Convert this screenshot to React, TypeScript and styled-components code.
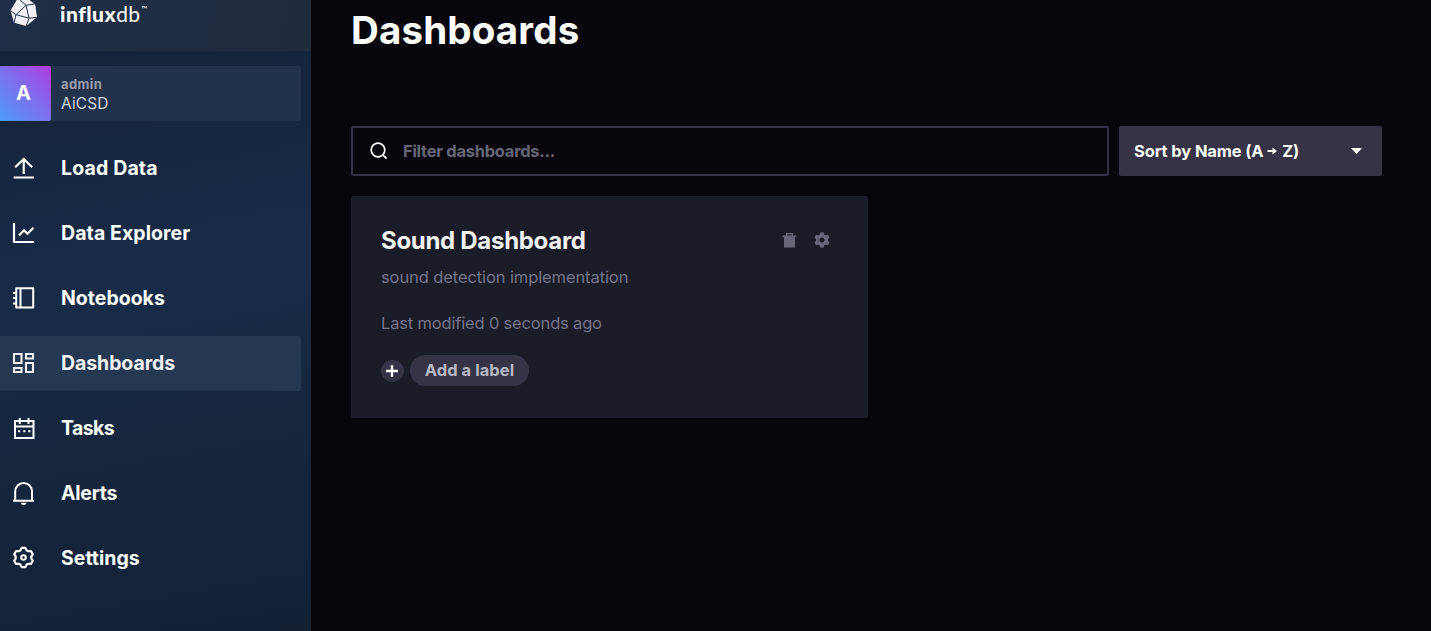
import React from 'react';
import styled, { createGlobalStyle } from 'styled-components';

const GlobalStyle = createGlobalStyle`
  * { box-sizing: border-box; }
  body { margin: 0; background: #07060c; font-family: Inter, "Liberation Sans", sans-serif; }
  button { font-family: inherit; border: 0; padding: 0; background: none; text-align: left; }
`;

const Page = styled.div`
  display: flex;
  width: 1431px;
  height: 631px;
  overflow: hidden;
  background: #07060c;
`;

const Sidebar = styled.nav`
  display: flex;
  flex-direction: column;
  flex: 0 0 311px;
  background: linear-gradient(170deg, #132139 0%, #14243b 12%, #182c48 45%, #15263d 68%, #132339 88%, #132133 100%);
`;

const Brand = styled.div`
  display: flex;
  height: 51px;
  padding-left: 9px;
  background: linear-gradient(100deg, #1f2f47, #1e2b3b);
`;

const Wordmark = styled.div`
  display: flex;
  margin: 1px 0 0 22px;
  font-family: Lato, sans-serif;
  font-size: 21px;
  line-height: 26px;
  color: #fff;
  letter-spacing: 0.5px;
`;
const Strong = styled.span`font-weight: 900;`;
const Thin = styled.span`font-weight: 400; letter-spacing: 0.3px;`;
const Trade = styled.span`font-size: 8px; line-height: 11px; margin: 3px 0 0 1px;`;

const User = styled.div`
  display: flex;
  width: 301px;
  height: 55px;
  margin: 15px 0 20px;
  background: #21334b;
  border-radius: 0 2px 2px 0;
`;
const Avatar = styled.div`
  width: 51px;
  padding-right: 4px;
  border-radius: 0 2px 2px 0;
  background: linear-gradient(45deg, #4d9cfa, #7c70ee 50%, #b13be0);
  color: #fff;
  font-size: 20px;
  font-weight: 700;
  line-height: 54px;
  text-align: center;
`;
const UserText = styled.div`
  padding: 9px 0 0 10px;
`;
const UserName = styled.div`
  font-size: 13px;
  line-height: 19px;
  font-weight: 700;
  color: #999dab;
  letter-spacing: 0.4px;
`;
const OrgName = styled.div`
  font-size: 15.5px;
  line-height: 19px;
  color: #d0d3dc;
  letter-spacing: 0.1px;
`;

const NavItem = styled.a<{ $active?: boolean }>`
  display: flex;
  align-items: center;
  gap: 25px;
  width: 301px;
  height: 55px;
  margin-bottom: 10px;
  padding: 0 0 2px 11px;
  border-radius: 0 2px 2px 0;
  background: ${(p) => (p.$active ? '#243852' : 'transparent')};
  color: ${(p) => (p.$active ? '#f1f1f6' : '#fff')};
`;
const NavLabel = styled.span<{ $track: number }>`
  font-size: 19.5px;
  line-height: 24px;
  font-weight: 700;
  letter-spacing: ${(p) => p.$track}px;
`;
const Icon = styled.svg`
  display: block;
  flex: none;
  fill: none;
  stroke: currentColor;
  stroke-width: 2;
`;

const Main = styled.main`
  flex: 1;
  padding: 6px 49px 0 40px;
`;
const Title = styled.h1`
  margin: 0 0 72px;
  font-size: 38.5px;
  line-height: 48px;
  font-weight: 700;
  color: #fff;
  letter-spacing: 0.15px;
`;
const Toolbar = styled.div`
  display: flex;
  gap: 10px;
  height: 50px;
  margin-bottom: 20px;
`;
const Search = styled.label`
  display: flex;
  align-items: center;
  gap: 15px;
  flex: 1;
  padding-left: 17px;
  border: 2px solid #333244;
  border-radius: 2px;
  color: #fff;
`;
const Placeholder = styled.span`
  font-size: 16.5px;
  font-weight: 700;
  color: #666677;
  letter-spacing: -0.27px;
`;
const Sort = styled.button`
  display: flex;
  align-items: center;
  justify-content: space-between;
  width: 263px;
  padding: 0 20.5px 0 15px;
  border-radius: 2px;
  background: #353345;
  color: #fff;
`;
const SortLabel = styled.span`
  display: flex;
  align-items: center;
  font-size: 16.5px;
  font-weight: 700;
  letter-spacing: -0.12px;
  white-space: pre;
`;

const Card = styled.article`
  width: 517px;
  height: 222px;
  padding: 30px;
  border-radius: 2px;
  background: #1c1b28;
`;
const CardHead = styled.header`
  display: flex;
  align-items: center;
  justify-content: space-between;
  height: 30px;
  padding-right: 8px;
`;
const CardTitle = styled.h2`
  margin: 0;
  font-size: 24px;
  line-height: 30px;
  font-weight: 700;
  color: #f1f1f4;
  letter-spacing: -0.3px;
`;
const Actions = styled.div`
  display: flex;
  gap: 17px;
  margin-top: -2px;
  color: #686779;
`;
const Note = styled.p<{ $top: number; $track: number }>`
  margin: ${(p) => p.$top}px 0 0;
  font-size: 16.5px;
  line-height: 24px;
  color: #757487;
  letter-spacing: ${(p) => p.$track}px;
`;
const Labels = styled.div`
  display: flex;
  align-items: center;
  gap: 6px;
  margin-top: 20px;
`;
const AddButton = styled.button`
  display: grid;
  place-items: center;
  width: 23px;
  height: 22px;
  padding-right: 1px;
  border-radius: 50%;
  background: #353345;
  color: #fff;
`;
const LabelPill = styled.span`
  width: 119px;
  height: 31px;
  border-radius: 16px;
  background: #353345;
  color: #b7b8c6;
  font-size: 16.5px;
  line-height: 30px;
  font-weight: 700;
  text-align: center;
  letter-spacing: 0.05px;
`;

// Outline of a six-toothed gear centred on (12.5, 12.5).
const gearOutline = (outer: number, inner: number) => {
  const points: string[] = [];
  for (let tooth = 0; tooth < 6; tooth++) {
    [[-22, inner], [-11, outer], [11, outer], [22, inner]].forEach(([offset, radius]) => {
      const angle = ((tooth * 60 - 90 + offset) * Math.PI) / 180;
      points.push(`${(12.5 + radius * Math.cos(angle)).toFixed(2)} ${(12.5 + radius * Math.sin(angle)).toFixed(2)}`);
    });
  }
  return `M${points.join('L')}Z`;
};

const icons: Record<string, React.ReactNode> = {
  load: <path d="M2.700 22.500h20.300M12.700 19V4M4.200 12.300 12.700 4l8.500 8.300" strokeWidth="2.200" />,
  explore: <path d="M3 3v19h20M8 15.500l5-5.200 3.500 3.500 6-6" strokeWidth="2.200" />,
  notebook: (
    <>
      <path d="M5.200 3.200h17v19.300h-17zM9.500 3v19" strokeLinejoin="round" />
      <path d="M2 8h3M2 13h3M2 18.500h3" />
    </>
  ),
  dashboard: <path d="M3 4h7.500v9H3zM15 4h7v4.500h-7zM15 13h7v9h-7zM3 18h7.500v4H3z" strokeWidth="2.100" />,
  tasks: (
    <>
      <path d="M4 6h18.500v17H4zM4 11.500h18.500M8.800 3v6M17.500 3v6" />
      <path d="M7 16.200h2.200M12.200 16.200h2.200M17.200 16.200h2.200" />
    </>
  ),
  alerts: (
    <>
      <path d="M2 20.800h21M4.200 20.500V11.500a8.400 8.400 0 0 1 16.800 0V20.500" />
      <path d="M9.800 22.800h5.700q-.4 2.200-2.850 2.200t-2.850-2.200z" fill="currentColor" stroke="none" />
    </>
  ),
  settings: (
    <>
      <path d={gearOutline(9.8, 7.9)} strokeLinejoin="round" strokeWidth="2.200" />
      <circle cx="12.5" cy="12.5" r="2.300" />
    </>
  ),
};

const navItems = [
  { id: 'load', label: 'Load Data', track: 0.15 },
  { id: 'explore', label: 'Data Explorer', track: 0.08 },
  { id: 'notebook', label: 'Notebooks', track: 0 },
  { id: 'dashboard', label: 'Dashboards', track: -0.08, active: true },
  { id: 'tasks', label: 'Tasks', track: -0.6 },
  { id: 'alerts', label: 'Alerts', track: -0.25 },
  { id: 'settings', label: 'Settings', track: 0 },
];

export default function App() {
  return (
    <Page>
      <GlobalStyle />
      <Sidebar>
        <Brand>
          <svg width="29" height="28" viewBox="0 0 29 28">
            <path d="M9.500 -3 L18 -2 L26.200 4.500 L28 17.300 L17.200 26 L5 22.800 L1.500 10.500 Z" fill="#f1f1f5" />
            <path
              d="M1.500 10.500 L7 14.700 L17 5.300 L10 -1 M17 5.300 L26.200 3.800 M17 5.300 L20 18.200 L28 17.300 M7 14.700 L20 18.200 L17.200 26 M7 14.700 L5 22.800"
              fill="none"
              stroke="#26344b"
              strokeWidth="1"
            />
          </svg>
          <Wordmark>
            <Strong>influx</Strong>
            <Thin>db</Thin>
            <Trade>™</Trade>
          </Wordmark>
        </Brand>
        <User>
          <Avatar>A</Avatar>
          <UserText>
            <UserName>admin</UserName>
            <OrgName>AiCSD</OrgName>
          </UserText>
        </User>
        {navItems.map((item) => (
          <NavItem key={item.id} $active={item.active}>
            <Icon width="25" height="25" viewBox="0 0 25 25">{icons[item.id]}</Icon>
            <NavLabel $track={item.track}>{item.label}</NavLabel>
          </NavItem>
        ))}
      </Sidebar>
      <Main>
        <Title>Dashboards</Title>
        <Toolbar>
          <Search>
            <Icon width="18" height="18" viewBox="0 0 18 18">
              <circle cx="8" cy="8" r="6.8" strokeWidth="1.700" />
              <path d="m12.8 12.8 3.800 3.800" strokeWidth="1.700" />
            </Icon>
            <Placeholder>Filter dashboards...</Placeholder>
          </Search>
          <Sort>
            <SortLabel>
              {'Sort by Name (A '}
              <Icon width="11" height="10" viewBox="0 0 11 10">
                <path d="M0.500 5h6" />
                <path d="M5.500 1.500 10 5 5.500 8.500z" fill="currentColor" stroke="none" />
              </Icon>
              {' Z)'}
            </SortLabel>
            <svg width="11" height="6" viewBox="0 0 11 6"><path d="M0 0h11L5.500 6z" fill="#fff" /></svg>
          </Sort>
        </Toolbar>
        <Card>
          <CardHead>
            <CardTitle>Sound Dashboard</CardTitle>
            <Actions>
              <svg width="15" height="16" viewBox="0 0 15 16" fill="currentColor">
                <path d="M0.500 3.500H4V1h7v2.500h3.500V5H13v10.500H2V5H0.500zM5.300 2.200v1.300h4.400V2.200z" fillRule="evenodd" />
              </svg>
              <svg width="16" height="16" viewBox="2.500 2.500 20 20" fill="currentColor">
                <path d={`${gearOutline(9.8, 7.4)} M12.500 9.500a3 3 0 1 0 .01 0z`} fillRule="evenodd" />
              </svg>
            </Actions>
          </CardHead>
          <Note $top={9} $track={-0.1}>sound detection implementation</Note>
          <Note $top={22} $track={-0.17}>Last modified 0 seconds ago</Note>
          <Labels>
            <AddButton>
              <Icon width="12" height="12" viewBox="0 0 12 12"><path d="M6 0v12M0 6h12" strokeWidth="2.400" /></Icon>
            </AddButton>
            <LabelPill>Add a label</LabelPill>
          </Labels>
        </Card>
      </Main>
    </Page>
  );
}
